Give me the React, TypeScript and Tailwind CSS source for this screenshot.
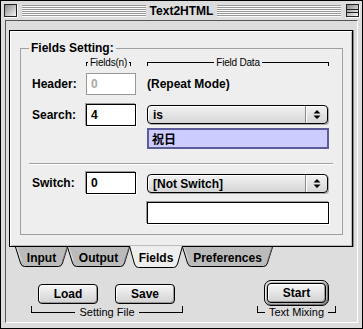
import React from 'react';

const sans = "font-['Liberation_Sans',Arial,sans-serif]";

function TopBracket({ label, className }: { label: string; className: string }) {
  return (
    <div className={`flex items-start h-[10px] ${className}`}>
      <div className="flex-1 mt-[4px] h-[4px] border-t border-l border-black" />
      <span className="px-[2px] text-[10px] leading-[10px] tracking-[-0.2px]">{label}</span>
      <div className="flex-1 mt-[4px] h-[4px] border-t border-r border-black" />
    </div>
  );
}

function BottomBracket({ label }: { label: string }) {
  return (
    <div className="flex items-start">
      <div className="flex-1 h-[7px] border-b border-l border-black" />
      <span className="px-[4px] text-[11px] leading-[12px]">{label}</span>
      <div className="flex-1 h-[7px] border-b border-r border-black" />
    </div>
  );
}

function EditField({ value, disabled }: { value: string; disabled?: boolean }) {
  return (
    <div
      className={`w-[50px] h-[22px] bg-white flex items-center pl-[4px] text-[12px] font-bold ${
        disabled
          ? 'border border-[#999] text-[#aaa]'
          : 'border border-black shadow-[-1px_-1px_0_#999,1px_1px_0_#fff]'
      }`}
    >
      {value}
    </div>
  );
}

function Popup({ value, className }: { value: string; className: string }) {
  return (
    <div
      className={`flex h-[19px] w-[181px] rounded-[4px] border border-black bg-[linear-gradient(#f2f2f2,#d6d6d6)] shadow-[inset_1px_1px_0_#fff,1px_1px_0_#aaa] ${className}`}
    >
      <div className="flex-1 pl-[5px] flex items-center text-[12px] font-bold">{value}</div>
      <div className="w-[22px] border-l border-[#888] shadow-[inset_1px_0_0_#fff] flex items-center justify-center">
        <svg width="8" height="11" viewBox="0 0 8 11">
          <path d="M4 1 L7.5 4.5 H0.5 Z M0.5 6.5 H7.5 L4 10 Z" fill="#000" />
        </svg>
      </div>
    </div>
  );
}

function Tab({ label, className, selected }: { label: string; className: string; selected?: boolean }) {
  const w = selected ? 54 : label === 'Input' ? 53 : label === 'Output' ? 63 : 91;
  const h = selected ? 22 : 20;
  const d = `M0.5 0 L5.5 ${h - 4} Q6.5 ${h - 0.5} 9.5 ${h - 0.5} L${w - 9.5} ${h - 0.5} Q${w - 6.5} ${h - 0.5} ${w - 5.5} ${h - 4} L${w - 0.5} 0`;
  return (
    <div className={`relative flex items-center justify-center text-[12px] font-bold ${className}`}>
      <svg className="absolute inset-0" width={w} height={h} viewBox={`0 0 ${w} ${h}`}>
        <path d={d} fill={selected ? '#eeeeee' : '#bbbbbb'} stroke="#000" strokeWidth="1" />
        {!selected && <path d={`M${w - 1} 0 L${w - 5.8} ${h - 5}`} stroke="#777" strokeWidth="1" fill="none" />}
        {!selected && <path d={`M1.8 0 L6.4 ${h - 6}`} stroke="#ddd" strokeWidth="1" fill="none" />}
      </svg>
      <span className={`relative ${selected ? 'pt-[2px]' : 'pt-[1px]'}`}>{label}</span>
    </div>
  );
}

function Button({ label, className }: { label: string; className: string }) {
  return (
    <div
      className={`rounded-[4px] border border-black bg-[linear-gradient(#f6f6f6,#d2d2d2)] shadow-[inset_1px_1px_0_#fff,inset_-1px_-1px_0_#999] flex items-center justify-center text-[12px] font-bold ${className}`}
    >
      {label}
    </div>
  );
}

const stripes =
  'flex-1 h-[12px] bg-[repeating-linear-gradient(to_bottom,#999_0px,#999_1px,#fafafa_1px,#fafafa_2px)]';

export default function App() {
  return (
    <div className={`w-[363px] h-[329px] border border-black bg-[#dddddd] flex flex-col text-black ${sans}`}>
      {/* Title bar */}
      <div className="h-[19px] shrink-0 flex items-center px-[3px]">
        <div className="w-[13px] h-[13px] border border-[#222] bg-[linear-gradient(135deg,#8a8a8a,#f4f4f4)] shadow-[1px_1px_0_#fff]" />
        <div className={`${stripes} ml-[5px]`} />
        <div className="px-[4px] text-[12px] font-bold leading-[14px]">Text2HTML</div>
        <div className={`${stripes} mr-[5px]`} />
        <div className="w-[13px] h-[13px] border border-[#222] bg-[linear-gradient(135deg,#8a8a8a,#f4f4f4)] shadow-[1px_1px_0_#fff] flex flex-col justify-center">
          <div className="h-[4px] border-t border-b border-[#222]" />
        </div>
      </div>

      {/* Content */}
      <div className="mx-[4px] mb-[5px] flex-1 border border-t-[#555] border-l-[#555] border-r-white border-b-white pt-[9px] pl-[3px] flex flex-col">
        {/* Tab panel */}
        <div className="w-[344px] h-[217px] shrink-0 border border-black bg-[#eeeeee] shadow-[inset_1px_1px_0_#fff,inset_-1px_-1px_0_#bbb,1px_0_0_#888] pt-[17px] pl-[10px]">
          <div className="relative w-[323px] h-[187px] border border-[#a0a0a0] pt-[9px] pl-[11px]">
            <div className="absolute -top-[8px] left-[8px] px-[2px] bg-[#eeeeee] text-[12px] font-bold leading-[14px]">
              Fields Setting:
            </div>

            <div className="flex">
              <div className="w-[54px]" />
              <TopBracket label="Fields(n)" className="w-[45px]" />
              <TopBracket label="Field Data" className="ml-[16px] w-[182px]" />
            </div>

            {/* Header */}
            <div className="flex items-center h-[22px] mt-[5px]">
              <div className="w-[54px] text-[12px] font-bold">Header:</div>
              <EditField value="0" disabled />
              <div className="ml-[11px] text-[12px] font-bold">(Repeat Mode)</div>
            </div>

            {/* Search */}
            <div className="flex items-start mt-[9px]">
              <div className="w-[54px] h-[22px] flex items-center text-[12px] font-bold">Search:</div>
              <EditField value="4" />
              <div className="ml-[11px] w-[182px]">
                <Popup value="is" className="mt-[1px]" />
                <div className="mt-[4px] h-[21px] border-2 border-[#5c5c99] bg-[#ccccff] flex items-center pl-[3px] text-[12px] font-bold font-['Noto_Sans_CJK_JP',sans-serif]">
                  祝日
                </div>
              </div>
            </div>

            <div className="mt-[14px] -ml-[3px] w-[304px] h-[2px] border-t border-[#a0a0a0] border-b border-b-white" />

            {/* Switch */}
            <div className="flex items-start mt-[7px]">
              <div className="w-[54px] h-[22px] flex items-center text-[12px] font-bold">Switch:</div>
              <EditField value="0" />
              <div className="ml-[11px] w-[182px]">
                <Popup value="[Not Switch]" className="mt-[2px]" />
                <div className="mt-[9px] h-[22px] border border-black bg-white shadow-[-1px_-1px_0_#999,1px_1px_0_#fff]" />
              </div>
            </div>
          </div>
        </div>

        {/* Tabs */}
        <div className="flex items-start ml-[6px]">
          <Tab label="Input" className="w-[53px] h-[20px]" />
          <Tab label="Output" className="-ml-[1px] w-[63px] h-[20px]" />
          <Tab label="Fields" selected className="-ml-[1px] -mt-[1px] w-[54px] h-[22px] z-10" />
          <Tab label="Preferences" className="-ml-[1px] w-[91px] h-[20px]" />
        </div>

        {/* Bottom buttons */}
        <div className="flex items-start mt-[12px]">
          <div className="ml-[22px] mt-[4px] w-[152px]">
            <div className="flex gap-[17px] pl-[7px]">
              <Button label="Load" className="w-[60px] h-[20px]" />
              <Button label="Save" className="w-[60px] h-[20px]" />
            </div>
            <div className="mt-[2px]">
              <BottomBracket label="Setting File" />
            </div>
          </div>
          <div className="ml-[74px] w-[79px]">
            <div className="mx-[7px] h-[26px] rounded-[7px] border border-black bg-[#b4b4b4] p-[2px] shadow-[inset_1px_1px_0_#eee,inset_-1px_-1px_0_#777]">
              <Button label="Start" className="w-full h-full" />
            </div>
            <BottomBracket label="Text Mixing" />
          </div>
        </div>
      </div>
    </div>
  );
}
